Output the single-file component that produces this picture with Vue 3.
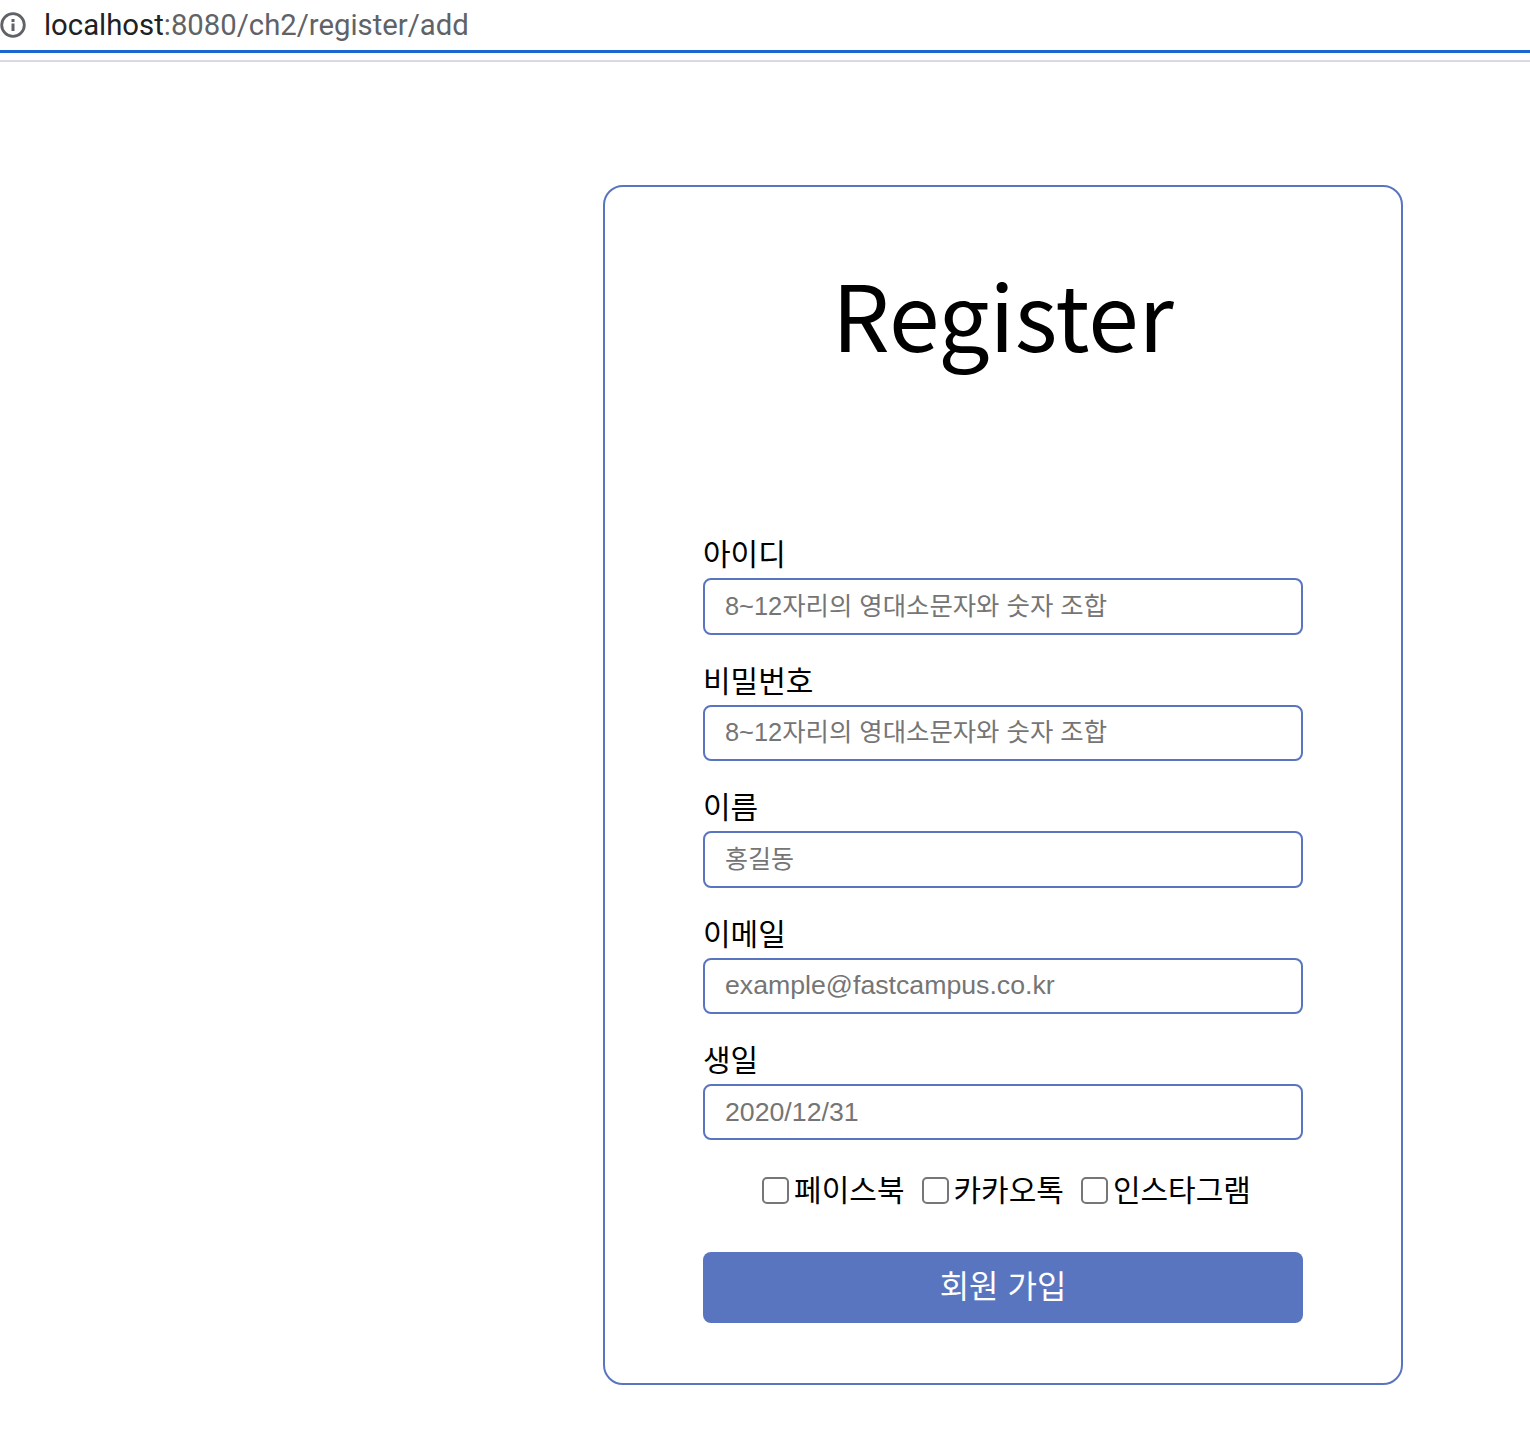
<template>
  <div class="page">
    <div class="address-bar">
      <svg class="info-icon" width="26" height="26" viewBox="0 0 26 26">
        <circle cx="13" cy="13" r="11.3" fill="none" stroke="#5f6368" stroke-width="2.8" />
        <rect x="11.5" y="11.5" width="3" height="7.5" fill="#5f6368" />
        <rect x="11.5" y="7" width="3" height="3" fill="#5f6368" />
      </svg>
      <span class="host">localhost</span><span class="path">:8080/ch2/register/add</span>
    </div>
    <div class="progress" />
    <div class="divider" />

    <form class="card" @submit.prevent>
      <h1 class="title">Register</h1>
      <div
        v-for="field in fields"
        :key="field.label"
        class="field"
      >
        <label class="field-label">{{ field.label }}</label>
        <input
          class="field-input"
          :class="field.kind"
          type="text"
          :placeholder="field.placeholder"
        >
      </div>
      <div class="sns">
        <label
          v-for="sns in snsList"
          :key="sns"
          class="sns-item"
        >
          <input class="sns-check" type="checkbox"><span>{{ sns }}</span>
        </label>
      </div>
      <button class="submit" type="submit">회원 가입</button>
    </form>
  </div>
</template>

<script setup>
const hint = '8~12자리의 영대소문자와 숫자 조합';

const fields = [
  { label: '아이디', placeholder: hint, kind: 'mixed' },
  { label: '비밀번호', placeholder: hint, kind: 'mixed' },
  { label: '이름', placeholder: '홍길동', kind: 'korean' },
  { label: '이메일', placeholder: 'example@fastcampus.co.kr', kind: 'latin' },
  { label: '생일', placeholder: '2020/12/31', kind: 'latin' }
];

const snsList = ['페이스북', '카카오톡', '인스타그램'];
</script>

<style>
html, body {
  background: #fff;
}
</style>

<style scoped>
.page {
  height: 1434px;
  overflow: hidden;
  font-family: "Liberation Sans", "Noto Sans CJK KR", sans-serif;
}

.address-bar {
  height: 50px;
  display: flex;
  align-items: center;
  font-family: Roboto, "Liberation Sans", sans-serif;
  font-size: 29.3px;
}

.info-icon {
  margin-right: 18px;
}

.host {
  color: #202124;
}

.path {
  color: #5f6368;
}

.progress {
  height: 3px;
  background: #1a67d2;
}

.divider {
  height: 2px;
  margin-top: 7px;
  background: #d9d9e3;
}

.card {
  box-sizing: border-box;
  width: 800px;
  height: 1200px;
  margin: 123px 0 0 603px;
  padding: 0 98px;
  border: 2px solid #5a75c0;
  border-radius: 20px;
}

.title {
  margin: 69px 0 170.4px;
  font-size: 91px;
  line-height: 112px;
  font-weight: 400;
  text-align: center;
  font-family: "Noto Sans CJK KR", sans-serif;
}

.field {
  height: 126.4px;
}

.field-label {
  display: block;
  height: 40px;
  font-size: 30px;
  line-height: 34px;
  color: #000;
}

.field-input {
  box-sizing: border-box;
  display: block;
  width: 600px;
  height: 56.4px;
  padding: 0 20px;
  border: 2px solid #5a75c0;
  border-radius: 8px;
  font-family: inherit;
  font-size: 25px;
  outline: none;
}

.field-input.mixed {
  font-size: 25.4px;
}

.field-input.latin {
  font-size: 26.7px;
}

.field-input::placeholder {
  color: #757575;
}

.sns {
  display: flex;
  justify-content: center;
  gap: 17px;
  margin-top: -1.4px;
  padding-left: 7px;
  font-size: 30px;
  line-height: 44px;
}

.sns-item {
  display: flex;
  align-items: center;
}

.sns-check {
  appearance: none;
  box-sizing: border-box;
  width: 27px;
  height: 27px;
  margin: 0 5px 0 0;
  border: 2px solid #767676;
  border-radius: 5px;
  background: #fff;
}

.submit {
  display: block;
  width: 600px;
  height: 71px;
  margin-top: 39px;
  padding: 0 0 6px;
  border: none;
  border-radius: 8px;
  background: #5a75c0;
  color: #fff;
  font-family: inherit;
  font-size: 32px;
}
</style>
